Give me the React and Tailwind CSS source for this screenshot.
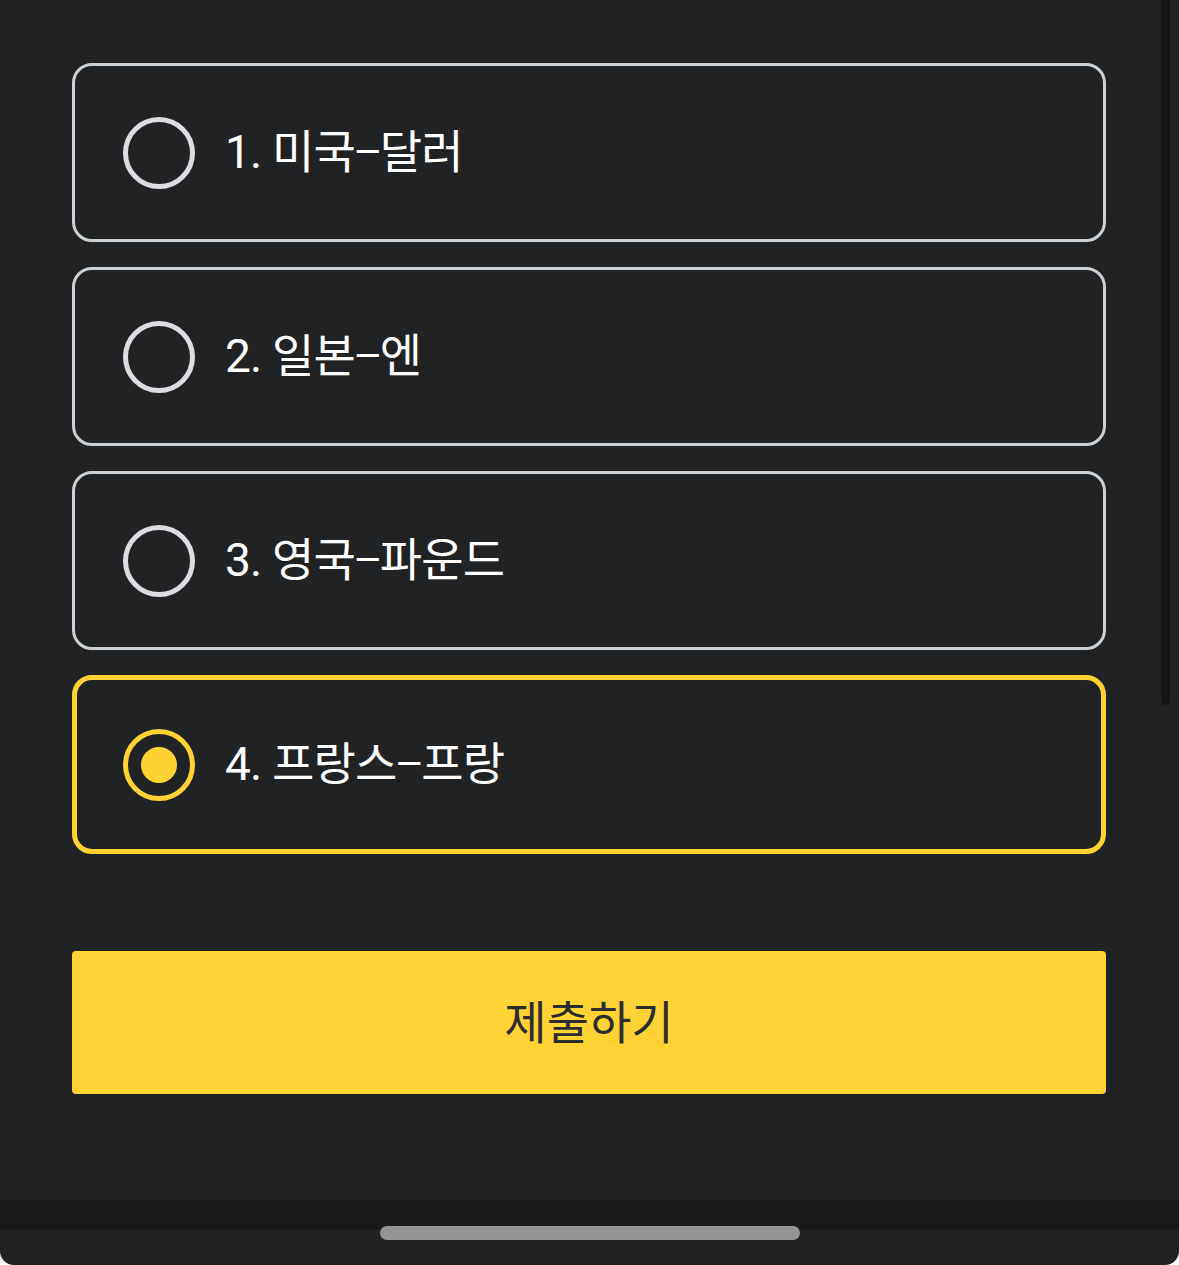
import { useState } from "react";

const options = [
  { id: 1, num: "1.", a: "미국", b: "달러" },
  { id: 2, num: "2.", a: "일본", b: "엔" },
  { id: 3, num: "3.", a: "영국", b: "파운드" },
  { id: 4, num: "4.", a: "프랑스", b: "프랑" },
];

const font = { fontFamily: '"Roboto", "Noto Sans CJK KR", sans-serif' };

function Radio({ checked }) {
  return (
    <div
      className={
        "w-[72px] h-[72px] rounded-full border-[5px] flex items-center justify-center shrink-0 " +
        (checked ? "border-[#ffd234]" : "border-[#dcdde0]")
      }
    >
      {checked && <div className="w-[36px] h-[36px] rounded-full bg-[#ffd234]" />}
    </div>
  );
}

export default function App() {
  const [selected, setSelected] = useState(4);

  return (
    <div className="w-[1179px] h-[1265px] bg-white" style={font}>
      <div className="h-full bg-[#212224] rounded-b-[14px] overflow-hidden flex flex-col">
        {/* Quiz area */}
        <div className="relative h-[1200px] px-[72px] pt-[63px] pr-[73px]">
          <div className="flex flex-col gap-[25px]">
            {options.map((opt) => {
              const active = opt.id === selected;
              return (
                <button
                  key={opt.id}
                  onClick={() => setSelected(opt.id)}
                  className={
                    "h-[179px] w-full rounded-[20px] flex items-center text-left " +
                    (active
                      ? "border-[5px] border-[#ffd234] pl-[46px]"
                      : "border-[3px] border-[#cdd0d3] pl-[48px]")
                  }
                >
                  <Radio checked={active} />
                  <span className="ml-[30px] mb-[6px] text-[46px] leading-none text-white tracking-[-0.8px]">
                    {opt.num} {opt.a}
                    <span className="font-['Noto_Sans_CJK_KR',sans-serif]">−</span>
                    {opt.b}
                  </span>
                </button>
              );
            })}
          </div>

          <button className="mt-[97px] w-full h-[143px] rounded-[4px] bg-[#ffd335] text-[#2d2d2d] text-[46px] leading-none">
            제출하기
          </button>

          {/* scrollbar */}
          <div className="absolute top-0 right-[9px] w-[9px] h-[705px] rounded-b-full bg-[#141517]" />
        </div>

        {/* Bottom nav */}
        <div className="relative flex-1 flex flex-col">
          <div className="h-[30px] bg-[#18191b]" />
          <div className="absolute left-[380px] top-[26px] w-[420px] h-[14px] rounded-full bg-[#959595]" />
        </div>
      </div>
    </div>
  );
}
